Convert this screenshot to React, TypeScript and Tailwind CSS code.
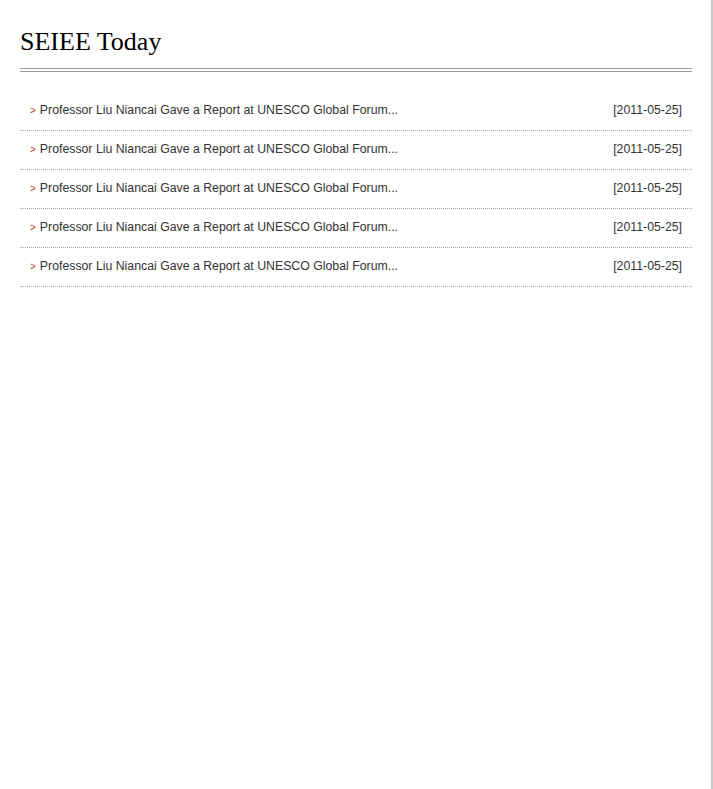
import React from 'react'

const news = Array.from({ length: 5 }, () => ({
  title: 'Professor Liu Niancai Gave a Report at UNESCO Global Forum...',
  date: '[2011-05-25]',
}))

export default function App() {
  return (
    <div className="flex min-h-[789px] bg-white">
      <div className="w-[711px] pl-5 pr-[19px] pt-[27px]">
        {/* Header */}
        <h2 className="font-['Liberation_Serif',serif] text-[26px] leading-[30px] text-black">
          SEIEE Today
        </h2>
        <div className="mt-[11px] h-[4px] border-y border-[#999]" />

        {/* News list */}
        <ul className="mt-5 font-['Liberation_Sans',Arial,sans-serif] text-[12.3px] text-[#333]">
          {news.map((item, i) => (
            <li
              key={i}
              className="flex h-[39px] items-center justify-between border-b border-dotted border-[#aaa] pb-[2px] pl-[10px] pr-[10px]"
            >
              <span className="flex items-center">
                <span className="mr-[4px] text-[10px] text-[#c0392b]">&gt;</span>
                {item.title}
              </span>
              <span>{item.date}</span>
            </li>
          ))}
        </ul>
      </div>
      <div className="w-[2px] bg-[#c8c8c8]" />
    </div>
  )
}
